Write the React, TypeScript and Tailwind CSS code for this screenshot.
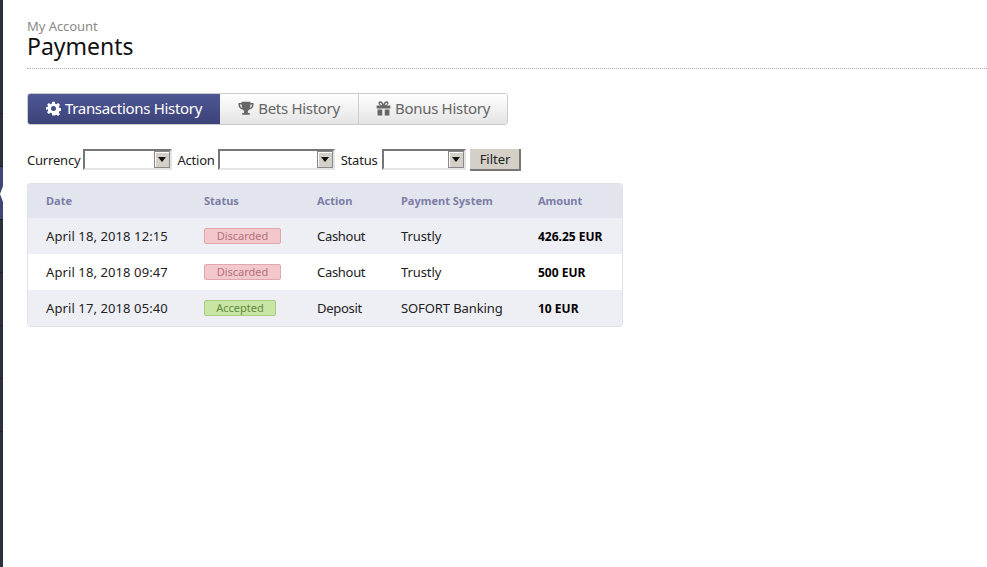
const rows = [
  { date: "April 18, 2018 12:15", status: "Discarded", action: "Cashout", system: "Trustly", amount: "426.25 EUR" },
  { date: "April 18, 2018 09:47", status: "Discarded", action: "Cashout", system: "Trustly", amount: "500 EUR" },
  { date: "April 17, 2018 05:40", status: "Accepted", action: "Deposit", system: "SOFORT Banking", amount: "10 EUR" },
];

function Gear() {
  return (
    <svg width="15" height="15" viewBox="0 0 24 24" fill="currentColor">
      <path fillRule="evenodd" d="M10 1h4l.7 3.300 1.900.8 2.900-1.800 2.800 2.800-1.800 2.900.8 1.900 3.300.7v4l-3.300.7-.8 1.900 1.800 2.900-2.800 2.800-2.900-1.800-1.900.8L14 23h-4l-.7-3.300-1.900-.8-2.900 1.800-2.800-2.800 1.800-2.900-.8-1.900L-.6 14v-4l3.300-.7.8-1.900L1.700 6.100l2.800-2.800 2.900 1.800 1.900-.8zM12 8a4 4 0 1 0 0 8 4 4 0 0 0 0-8z" />
    </svg>
  );
}

function Trophy() {
  return (
    <svg width="16" height="15" viewBox="0 0 24 24" fill="currentColor">
      <path fillRule="evenodd" d="M5 1h14v2h5v3c0 4-3 7-6.500 7.500-.8 1-1.700 1.700-2.500 2V19h3v3H6v-3h3v-3.500c-.8-.3-1.700-1-2.500-2C3 13 0 10 0 6V3h5zM2.500 5.500V6c0 2.300 1.500 4.300 3.500 5-.6-1.600-1-3.400-1-5.500zm19 0H19c0 2.100-.4 3.900-1 5.500 2-.7 3.500-2.700 3.500-5z" />
    </svg>
  );
}

function Gift() {
  return (
    <svg width="15" height="15" viewBox="0 0 24 24" fill="currentColor">
      <path fillRule="evenodd" d="M1 7h6.500C5.500 6.500 4 5 4 3.500 4 1.500 5.500.5 7 .5c2.300 0 4 2.200 5 4.500 1-2.300 2.700-4.500 5-4.500 1.500 0 3 1 3 3C20 5 18.500 6.500 16.500 7H23v5H1zm6-4.200c-.8 0-1 .4-1 .8C6 5 8 6.500 10 7 9.500 5 8.300 2.800 7 2.800zm10 0c-1.300 0-2.500 2.200-3 4.200 2-.5 4-2 4-3.400 0-.4-.2-.8-1-.8zM2.500 13.500H10V23H2.500zm11.500 0h7.500V23H14z" />
    </svg>
  );
}

function Field({ label, width, gap }: { label: string; width: string; gap: string }) {
  return (
    <>
      <span className="tracking-[-0.2px]">{label}</span>
      <span className={`flex h-[21px] justify-end border-2 border-t-[#767676] border-l-[#767676] border-r-[#e4e4e4] border-b-[#e4e4e4] bg-white ${gap} ${width}`}>
        <span className="flex h-[17px] w-[16px] items-center justify-center border border-[#888] bg-[#d4d0c8] shadow-[inset_1px_1px_0_#fff]">
          <svg width="8" height="5" viewBox="0 0 8 5" fill="#111"><path d="M0 0h8L4 5z" /></svg>
        </span>
      </span>
    </>
  );
}

function Tab({ children, className }: { children: React.ReactNode; className: string }) {
  return <div className={`flex h-[30px] items-center justify-center gap-[4px] pb-[2px] text-[15px] tracking-[-0.3px] ${className}`}>{children}</div>;
}

function Badge({ status }: { status: string }) {
  const ok = status === "Accepted";
  return (
    <span className={`-mt-[1px] flex h-[16px] items-center justify-center rounded-[2px] border text-[11px] ${ok ? "w-[72px] border-[#a9cf85] bg-[#c9e5a3] text-[#5f8a3e]" : "w-[77px] border-[#e0a8ad] bg-[#f2c8cc] text-[#b5707a]"}`}>
      {status}
    </span>
  );
}

export default function App() {
  return (
    <div className="flex h-[567px] w-[987px] overflow-hidden bg-white font-['Noto_Sans',sans-serif] text-[#222]">
      <aside className="relative flex w-[3px] shrink-0 flex-col bg-[#2b303b]">
        <div className="h-[114px] border-b border-[#1b1e25]" />
        <div className="h-[53px] border-b border-[#1b1e25]" />
        <div className="h-[53px] border-b border-[#1b1e25] bg-[#3d4677]" />
        <div className="h-[53px] border-b border-[#1b1e25]" />
        <div className="h-[53px] border-b border-[#1b1e25]" />
        <div className="h-[53px] border-b border-[#1b1e25]" />
        <div className="h-[53px] border-b border-[#1b1e25]" />
        <svg className="absolute left-0 top-[186px]" width="3" height="16" viewBox="0 0 3 16" fill="#fff"><path d="M3 0v16L0 8z" /></svg>
      </aside>
      <main className="flex-1 pl-[24px] pt-[19px]">
        <div className="border-b border-dotted border-[#aaa] pb-[10px]">
          <div className="text-[13px] leading-[15px] tracking-[-0.05px] text-[#8a8a8a]">My Account</div>
          <h1 className="text-[23px] leading-[24px] text-[#111]">Payments</h1>
        </div>

        <div className="mt-[24px] flex w-[481px] overflow-hidden rounded-[3px] border border-[#ccc]">
          <Tab className="w-[192px] bg-gradient-to-b from-[#4f5794] to-[#3c4379] text-white"><Gear />Transactions History</Tab>
          <Tab className="w-[139px] border-r border-[#ccc] bg-gradient-to-b from-white to-[#e4e4e4] text-[#666]"><Trophy />Bets History</Tab>
          <Tab className="flex-1 bg-gradient-to-b from-white to-[#e4e4e4] text-[#666]"><Gift />Bonus History</Tab>
        </div>

        <div className="mt-[24px] flex h-[22px] items-start text-[13px] leading-[22px] text-[#222]">
          <Field label="Currency" width="w-[89px]" gap="ml-[3px]" />
          <span className="ml-[5px]" />
          <Field label="Action" width="w-[117px]" gap="ml-[3px]" />
          <span className="ml-[6px]" />
          <Field label="Status" width="w-[84px]" gap="ml-[4px]" />
          <button className="ml-[4px] h-[22px] w-[51px] border-r-2 border-b-2 border-[#777] bg-[#d4d0c8] pl-[2px] text-[13px] leading-[20px] text-[#222]">Filter</button>
        </div>

        <div className="mt-[12px] w-[596px] overflow-hidden rounded-[3px] border border-[#e2e3ea] text-[13px]">
          <div className="flex h-[34px] items-center bg-[#e3e5ee] pl-[18px] text-[11px] font-bold text-[#7c7ca6]">
            <div className="w-[158px]">Date</div>
            <div className="w-[113px]">Status</div>
            <div className="w-[84px]">Action</div>
            <div className="w-[137px]">Payment System</div>
            <div>Amount</div>
          </div>
          {rows.map((r, i) => (
            <div key={r.date} className={`flex h-[36px] items-center pl-[18px] pt-[1px] ${i % 2 === 0 ? "bg-[#eeeef5]" : "bg-white"}`}>
              <div className="w-[158px] tracking-[0.1px]">{r.date}</div>
              <div className="w-[113px]"><Badge status={r.status} /></div>
              <div className="w-[84px] tracking-[-0.3px]">{r.action}</div>
              <div className="w-[137px] tracking-[-0.1px]">{r.system}</div>
              <div className="text-[12px] font-bold text-black">{r.amount}</div>
            </div>
          ))}
        </div>
      </main>
    </div>
  );
}
